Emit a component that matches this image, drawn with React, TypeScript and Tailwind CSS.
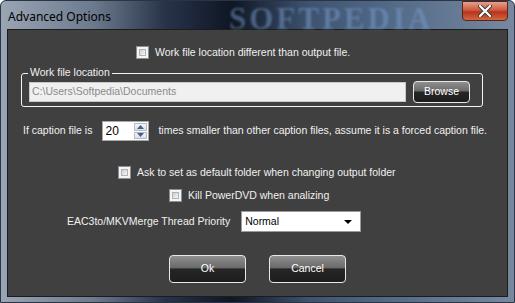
import React from "react";

const FONT = { fontFamily: '"Liberation Sans", Arial, sans-serif' };

function Check({ label }: { label: string }) {
  return (
    <div className="flex items-center gap-[6px]">
      <div className="w-[13px] h-[13px] border border-[#8e8f8f] bg-[#f4f4f4] p-[2px]">
        <div className="w-full h-full bg-gradient-to-br from-[#cbcfd5] to-[#f6f6f6] border border-[#aeb3b9]" />
      </div>
      <span className="text-[#f0f0f0] text-[10.5px] leading-none">{label}</span>
    </div>
  );
}

function GlassButton({ label, className }: { label: string; className: string }) {
  return (
    <div
      className={`relative rounded-[4px] border border-[#e8e8e8] overflow-hidden flex items-center justify-center text-white text-[10.5px] ${className}`}
      style={{ background: "linear-gradient(#8f8f8f 0%, #6a6a6a 45%, #262626 50%, #1d1d1d 100%)" }}
    >
      <span className="relative">{label}</span>
    </div>
  );
}

export default function App() {
  return (
    <div
      className="w-[515px] h-[303px] flex flex-col overflow-hidden rounded-t-[6px] border border-[#2b3444]"
      style={{ ...FONT, background: "linear-gradient(90deg, #9aa5b4 0%, #6c7a8e 18%, #28334a 32%, #0f1624 45%, #3e5370 60%, #506987 75%, #7888a0 100%)" }}
    >
      <div className="h-[28px] flex items-start relative">
        <span className="mt-[7px] ml-[7px] text-[12px] text-black" style={{ fontFamily: '"Noto Sans", "Open Sans", sans-serif' }}>
          Advanced Options
        </span>
        <span
          className="ml-[118px] mt-[2px] text-[31px] leading-none font-bold tracking-[3px] text-[#7a9ccc]/50 blur-[1px]"
          style={{ fontFamily: '"Liberation Serif", serif' }}
        >
          SOFTPEDIA
        </span>
        <div
          className="ml-auto mr-[6px] w-[46px] h-[20px] rounded-b-[4px] border border-[#5a2418] flex items-center justify-center"
          style={{ background: "linear-gradient(#e4a08c 0%, #cf5a3e 45%, #b8331b 55%, #d0673f 100%)" }}
        >
          <svg width="14" height="12" viewBox="0 0 14 12">
            <path d="M2 1 L12 11 M12 1 L2 11" stroke="#3a3a3a" strokeWidth="4" strokeLinecap="round" />
            <path d="M2 1 L12 11 M12 1 L2 11" stroke="#ffffff" strokeWidth="2.2" strokeLinecap="round" />
          </svg>
        </div>
      </div>

      <div className="mx-[6px] h-[268px] border border-[#1c1c1c] bg-[#404040] flex flex-col">
        <div className="mt-[16px] pl-[128px]">
          <Check label="Work file location different than output file." />
        </div>

        <div className="mt-[14px] ml-[13px] w-[462px] h-[34px] border border-[#f4f4f4] rounded-[3px] relative flex items-center gap-[7px] pl-[7px] pt-[3px]">
          <span className="absolute -top-[7px] left-[6px] px-[2px] bg-[#404040] text-[#f0f0f0] text-[10.5px] leading-none">
            Work file location
          </span>
          <div className="w-[377px] h-[20px] bg-[#f0f0f0] border border-[#c8c8c8] flex items-center pl-[2px] text-[10.5px] text-[#8a8a8a]">
            C:\Users\Softpedia\Documents
          </div>
          <GlassButton label="Browse" className="w-[57px] h-[22px]" />
        </div>

        <div className="mt-[14px] ml-[15px] flex items-center text-[10.5px] text-[#f0f0f0]">
          <span>If caption file is</span>
          <div className="ml-[10px] w-[47px] h-[20px] bg-white border border-[#a9a9a9] flex items-center">
            <span className="flex-1 pl-[2px] text-[12px] text-black">20</span>
            <div className="w-[15px] h-full flex flex-col gap-[1px] p-[1px]">
              {[0, 1].map((i) => (
                <div key={i} className="flex-1 flex items-center justify-center border border-[#b5bcc8] bg-gradient-to-b from-[#f2f4f8] to-[#d9dfe9]">
                  <svg width="7" height="4" viewBox="0 0 7 4">
                    <path d={i === 0 ? "M0 4 L3.5 0 L7 4 Z" : "M0 0 L3.5 4 L7 0 Z"} fill="#4a5f88" />
                  </svg>
                </div>
              ))}
            </div>
          </div>
          <span className="ml-[9px]">times smaller than other caption files, assume it is a forced caption file.</span>
        </div>

        <div className="mt-[25px] pl-[110px]">
          <Check label="Ask to set as default folder when changing output folder" />
        </div>
        <div className="mt-[10px] pl-[161px]">
          <Check label="Kill PowerDVD when analizing" />
        </div>

        <div className="mt-[9px] ml-[59px] flex items-center text-[10.5px] text-[#f0f0f0]">
          <span>EAC3to/MKVMerge Thread Priority</span>
          <div className="ml-[11px] w-[120px] h-[21px] bg-white border border-[#9a9a9a] flex items-center pl-[3px] text-black">
            <span className="flex-1">Normal</span>
            <svg width="8" height="4" viewBox="0 0 8 4" className="mr-[8px]">
              <path d="M0 0 L8 0 L4 4 Z" fill="#000" />
            </svg>
          </div>
        </div>

        <div className="mt-[23px] ml-[161px] flex gap-[23px]">
          <GlassButton label="Ok" className="w-[77px] h-[28px]" />
          <GlassButton label="Cancel" className="w-[77px] h-[28px]" />
        </div>
      </div>
    </div>
  );
}
